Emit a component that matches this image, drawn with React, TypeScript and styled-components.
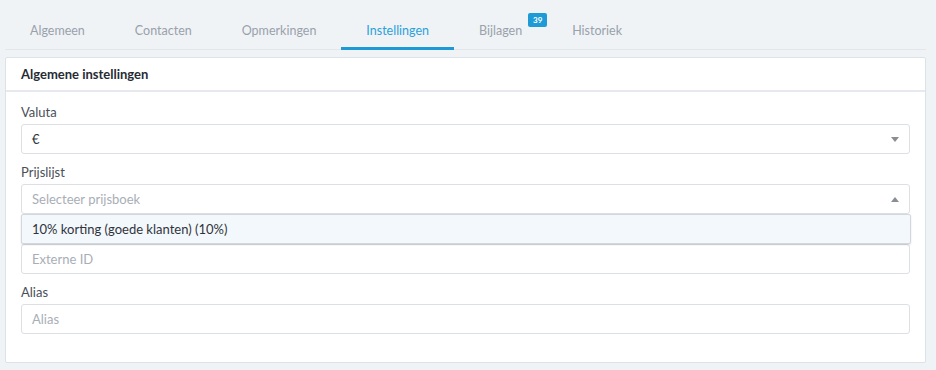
import React from 'react';
import styled, { createGlobalStyle } from 'styled-components';

const GlobalStyle = createGlobalStyle`
    html, body {
        margin: 0;
        padding: 0;
        background-color: #eff3f6;
        font-family: Lato, "Open Sans", sans-serif;
        font-size: 13px;
    }
`;

const Page = styled.div`
    width: 936px;
    height: 370px;
    box-sizing: border-box;
    padding: 0 10px 0 5px;
    overflow: hidden;
`;

const TabBar = styled.div`
    display: flex;
    flex-direction: row;
    height: 49px;
    border-bottom: 1px solid #e3e7eb;
`;

const Tab = styled.div<{ $active?: boolean }>`
    position: relative;
    display: flex;
    align-items: center;
    padding: 14px 25px 0 25px;
    font-size: 12.5px;
    color: ${(p) => (p.$active ? '#2d9fd9' : '#9aa1ab')};
    border-bottom: 3px solid ${(p) => (p.$active ? '#1d9ad6' : 'transparent')};
    margin-bottom: -1px;
`;

const Badge = styled.span`
    position: absolute;
    top: 13px;
    right: 0;
    width: 19px;
    height: 14px;
    border-radius: 2px;
    background-color: #1e9bd7;
    color: #ffffff;
    font-size: 8px;
    font-weight: 700;
    display: flex;
    align-items: center;
    justify-content: center;
`;

const Card = styled.div`
    margin-top: 7px;
    background-color: #ffffff;
    border: 1px solid #dde2e8;
    border-radius: 2px;
`;

const CardHeader = styled.div`
    height: 32px;
    display: flex;
    align-items: center;
    padding: 0 15px;
    font-weight: 700;
    color: #262b33;
    border-bottom: 2px solid #e6e9ee;
`;

const CardBody = styled.div`
    padding: 12px 15px 18px 15px;
`;

const FormGroup = styled.div<{ $raised?: boolean }>`
    position: relative;
    margin-bottom: 10px;
    z-index: ${(p) => (p.$raised ? 2 : 'auto')};
`;

const Label = styled.div`
    height: 20px;
    line-height: 16px;
    color: #4a4f57;
`;

const Field = styled.div<{ $placeholder?: boolean }>`
    position: relative;
    height: 30px;
    box-sizing: border-box;
    border: 1px solid #dcdfe4;
    border-radius: 3px;
    padding: 0 10px;
    display: flex;
    align-items: center;
    color: ${(p) => (p.$placeholder ? '#a9aeb6' : '#30343a')};
`;

const Caret = styled.span<{ $up?: boolean }>`
    position: absolute;
    right: 10px;
    top: 12px;
    width: 0;
    height: 0;
    border-left: 4px solid transparent;
    border-right: 4px solid transparent;
    ${(p) => (p.$up ? 'border-bottom: 5px solid #8a8d92;' : 'border-top: 5px solid #8a8d92;')}
`;

const Menu = styled.div`
    position: absolute;
    z-index: 2;
    top: 100%;
    left: -1px;
    right: -2px;
    margin-top: 1px;
    height: 30px;
    box-sizing: border-box;
    background-color: #f3f8fd;
    border: 1px solid #d4d8dd;
    border-radius: 2px;
    box-shadow: 0 1px 2px rgba(0, 0, 0, 0.12);
    padding: 0 10px;
    display: flex;
    align-items: center;
    color: #30343a;
`;

const tabs = ['Algemeen', 'Contacten', 'Opmerkingen', 'Instellingen', 'Bijlagen', 'Historiek'];

export default function App() {
    return (
        <Page>
            <GlobalStyle />
            <TabBar>
                {tabs.map((t) => (
                    <Tab key={t} $active={t === 'Instellingen'}>
                        {t}
                        {t === 'Bijlagen' && <Badge>39</Badge>}
                    </Tab>
                ))}
            </TabBar>
            <Card>
                <CardHeader>Algemene instellingen</CardHeader>
                <CardBody>
                    <FormGroup>
                        <Label>Valuta</Label>
                        <Field>
                            €
                            <Caret />
                        </Field>
                    </FormGroup>
                    <FormGroup $raised>
                        <Label>Prijslijst</Label>
                        <Field $placeholder>
                            Selecteer prijsboek
                            <Caret $up />
                            <Menu>10% korting (goede klanten) (10%)</Menu>
                        </Field>
                    </FormGroup>
                    <FormGroup>
                        <Label>Externe ID</Label>
                        <Field $placeholder>Externe ID</Field>
                    </FormGroup>
                    <FormGroup>
                        <Label>Alias</Label>
                        <Field $placeholder>Alias</Field>
                    </FormGroup>
                </CardBody>
            </Card>
        </Page>
    );
}
